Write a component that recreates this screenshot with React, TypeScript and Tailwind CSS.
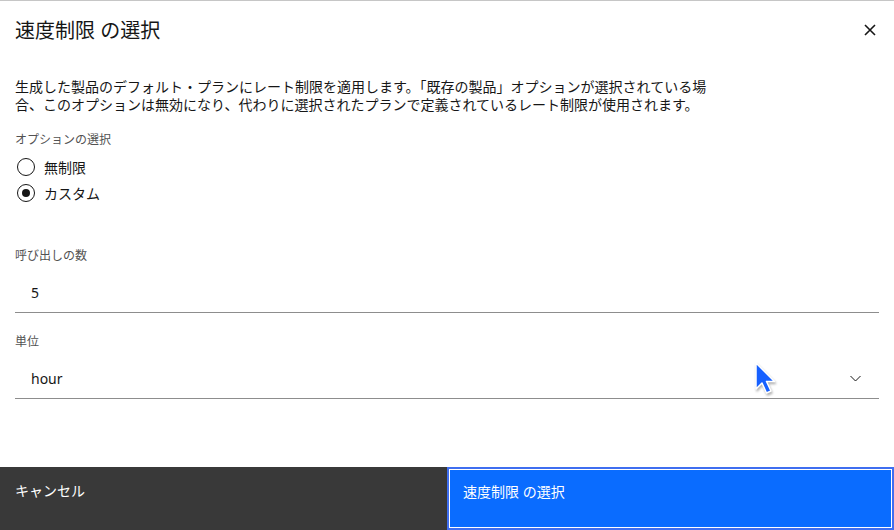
import React from "react";

// Radio button drawn as a circle, filled dot when selected
const Radio = ({ label, checked }: { label: string; checked?: boolean }) => {
  return (
    <label className="flex items-center h-[20px] gap-x-[9px] pl-[17px] cursor-pointer">
      <span className="w-[18px] h-[18px] rounded-full border border-[#161616] flex items-center justify-center">
        {checked && <span className="w-[8px] h-[8px] rounded-full bg-[#161616]" />}
      </span>
      <span className="text-[14px] text-[#161616]">{label}</span>
    </label>
  );
};

const App = () => {
  return (
    <div
      className="relative h-[530px] w-[894px] bg-white border-t border-[#c6c6c6] flex flex-col overflow-hidden"
      style={{ fontFamily: '"Noto Sans", "Noto Sans CJK JP", sans-serif' }}
    >
      {/* header */}
      <div className="flex items-start justify-between pl-[15px] pr-[14px] pt-[16px]">
        <h2 className="text-[20px] leading-[28px] text-[#161616]">速度制限 の選択</h2>
        <button className="mt-[3px] w-[20px] h-[20px] flex items-center justify-center text-[#161616]">
          <svg width="14" height="14" viewBox="0 0 14 14" fill="none" stroke="currentColor" strokeWidth="1.6">
            <path d="M2 2 L12 12 M12 2 L2 12" />
          </svg>
        </button>
      </div>

      {/* body */}
      <div className="px-[15px]">
        <p className="mt-[33px] max-w-[706px] text-[14px] leading-[18px] text-[#161616]">
          生成した製品のデフォルト・プランにレート制限を適用します。「既存の製品」オプションが選択されている場合、このオプションは無効になり、代わりに選択されたプランで定義されているレート制限が使用されます。
        </p>

        <div className="mt-[18px] text-[12px] leading-[16px] text-[#525252]">オプションの選択</div>
        <div className="mt-[9px] flex flex-col gap-y-[6px] -ml-[15px]">
          <Radio label="無制限" />
          <Radio label="カスタム" checked />
        </div>

        <div className="mt-[45px] text-[12px] leading-[16px] text-[#525252]">呼び出しの数</div>
        <div className="mt-[9px] h-[40px] border-b border-[#8d8d8d] flex items-center pl-[16px] text-[14px] text-[#161616]">
          5
        </div>

        <div className="mt-[21px] text-[12px] leading-[16px] text-[#525252]">単位</div>
        <div className="mt-[9px] h-[40px] border-b border-[#8d8d8d] flex items-center justify-between pl-[16px] pr-[18px] text-[14px] text-[#161616]">
          <span>hour</span>
          <svg width="11" height="7" viewBox="0 0 11 7" fill="none" stroke="#161616" strokeWidth="1">
            <path d="M0.5 1 L5.5 6 L10.5 1" />
          </svg>
        </div>
      </div>

      {/* footer */}
      <div className="mt-auto grid grid-cols-2 h-[63px] text-[14px] text-white">
        <button className="bg-[#393939] text-left pl-[15px] pt-[13px] self-stretch flex items-start">
          キャンセル
        </button>
        <button className="bg-[#0a6cff] border-2 border-[#3f6ef0] shadow-[inset_0_0_0_1px_#ffffff] text-left pl-[14px] pt-[12px] flex items-start">
          速度制限 の選択
        </button>
      </div>

      {/* mouse pointer */}
      <svg
        className="absolute left-[753px] top-[360px] drop-shadow-[1px_2px_1px_rgba(0,0,0,0.3)]"
        width="26"
        height="36"
        viewBox="0 0 26 36"
      >
        <path
          d="M3 2 L3 28 L9 22 L13.5 32 L18 30 L13.5 20.5 L21.5 20.5 Z"
          fill="#1660ff"
          stroke="#ffffff"
          strokeWidth="1.5"
          strokeLinejoin="round"
        />
      </svg>
    </div>
  );
};

export default App;
